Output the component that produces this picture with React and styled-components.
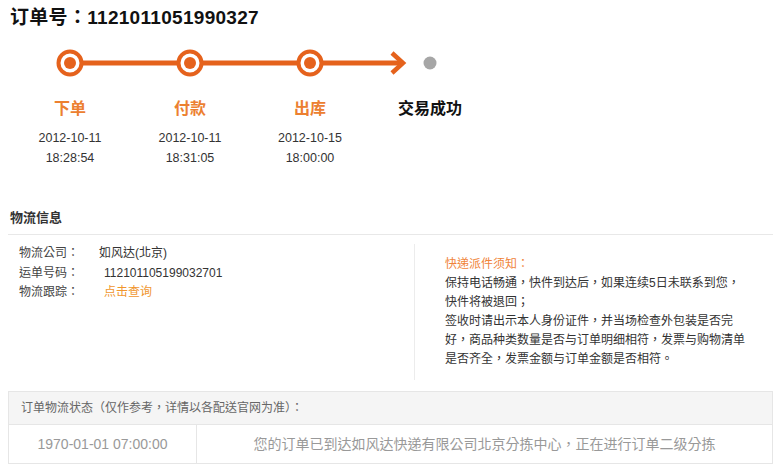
import styled, { createGlobalStyle } from "styled-components";

const GlobalStyle = createGlobalStyle`
  body {
    margin: 0;
    background: #fff;
    font-family: "Liberation Sans", "Noto Sans CJK TC", "Noto Sans CJK SC", sans-serif;
    color: #333;
  }
`;

const Page = styled.div`
  width: 765px;
  padding: 0 2px 0 8px;
`;

const OrderTitle = styled.h1`
  margin: 0;
  padding-left: 2px;
  height: 35px;
  line-height: 36px;
  font-size: 19px;
  font-weight: bold;
  color: #111;
  letter-spacing: 0.3px;
`;

const Track = styled.svg`
  display: block;
  margin: 13px 0 0 2px;
`;

const Steps = styled.div`
  display: flex;
  margin: 20px 0 0 2px;
`;

const Step = styled.div`
  width: 120px;
  text-align: center;
`;

const StepName = styled.div`
  font-size: 16px;
  font-weight: bold;
  line-height: 22px;
  color: ${({ $done }) => ($done ? "#ec8030" : "#111")};
`;

const StepTime = styled.div`
  margin-top: 8px;
  font-size: 12.5px;
  line-height: 20px;
  color: #333;
`;

const SectionTitle = styled.h2`
  margin: 40px 0 0;
  padding: 0 0 6px 2px;
  font-size: 13px;
  line-height: 20px;
  font-weight: bold;
  color: #333;
  border-bottom: 1px solid #e8e8e8;
`;

const InfoBox = styled.div`
  display: flex;
  padding-top: 9px;
`;

const InfoLeft = styled.div`
  width: 395px;
  height: 136px;
  padding-left: 11px;
  border-right: 1px solid #ececec;
`;

const InfoRow = styled.div`
  display: flex;
  font-size: 12px;
  line-height: 19.5px;
`;

const InfoLabel = styled.span`
  width: 80px;
  color: #444;
`;

const InfoValue = styled.span`
  padding-left: ${({ $indent }) => ($indent ? "5px" : "0")};
  color: ${({ $link }) => ($link ? "#f0962e" : "#333")};
  cursor: ${({ $link }) => ($link ? "pointer" : "auto")};
`;

const Notice = styled.div`
  width: 306px;
  padding: 11px 0 0 30px;
  font-size: 12px;
  line-height: 19px;
  color: #333;
`;

const NoticeTitle = styled.div`
  color: #f0843a;
`;

const StatusTable = styled.div`
  margin-top: 11px;
  border: 1px solid #e6e6e6;
`;

const StatusHead = styled.div`
  height: 32px;
  line-height: 32px;
  padding-left: 12px;
  background: #f5f5f5;
  border-bottom: 1px solid #e6e6e6;
  font-size: 12px;
  color: #666;
`;

const StatusRow = styled.div`
  display: flex;
  height: 38px;
  line-height: 38px;
  color: #999;
`;

const StatusTime = styled.div`
  width: 187px;
  text-align: center;
  font-size: 14px;
  border-right: 1px solid #e6e6e6;
`;

const StatusText = styled.div`
  flex: 1;
  text-align: center;
  font-size: 14px;
`;

const ORANGE = "#e5621c";

function ProgressTrack() {
  const points = [60, 180, 300];
  return (
    <Track width="440" height="30" viewBox="0 0 440 30">
      <line x1="60" y1="15" x2="392" y2="15" stroke={ORANGE} strokeWidth="5" />
      <polyline
        points="382,5 393,15 382,25"
        fill="none"
        stroke={ORANGE}
        strokeWidth="4.5"
        strokeLinejoin="miter"
      />
      {points.map((x) => (
        <g key={x}>
          <circle cx={x} cy="15" r="11.5" fill="#fff" stroke={ORANGE} strokeWidth="4" />
          <circle cx={x} cy="15" r="6" fill={ORANGE} />
        </g>
      ))}
      <circle cx="420" cy="15" r="6.5" fill="#a6a6a6" />
    </Track>
  );
}

const steps = [
  { name: "下单", date: "2012-10-11", time: "18:28:54", done: true },
  { name: "付款", date: "2012-10-11", time: "18:31:05", done: true },
  { name: "出库", date: "2012-10-15", time: "18:00:00", done: true },
  { name: "交易成功", done: false },
];

export default function App() {
  return (
    <>
      <GlobalStyle />
      <Page>
        <OrderTitle>订单号：1121011051990327</OrderTitle>
        <ProgressTrack />
        <Steps>
          {steps.map((s) => (
            <Step key={s.name}>
              <StepName $done={s.done}>{s.name}</StepName>
              {s.date && (
                <StepTime>
                  {s.date}
                  <br />
                  {s.time}
                </StepTime>
              )}
            </Step>
          ))}
        </Steps>

        <SectionTitle>物流信息</SectionTitle>
        <InfoBox>
          <InfoLeft>
            <InfoRow>
              <InfoLabel>物流公司：</InfoLabel>
              <InfoValue>如风达(北京)</InfoValue>
            </InfoRow>
            <InfoRow>
              <InfoLabel>运单号码：</InfoLabel>
              <InfoValue $indent>112101105199032701</InfoValue>
            </InfoRow>
            <InfoRow>
              <InfoLabel>物流跟踪：</InfoLabel>
              <InfoValue $indent $link>点击查询</InfoValue>
            </InfoRow>
          </InfoLeft>
          <Notice>
            <NoticeTitle>快递派件须知：</NoticeTitle>
            保持电话畅通，快件到达后，如果连续5日未联系到您，快件将被退回；
            <br />
            签收时请出示本人身份证件，并当场检查外包装是否完好，商品种类数量是否与订单明细相符，发票与购物清单是否齐全，发票金额与订单金额是否相符。
          </Notice>
        </InfoBox>

        <StatusTable>
          <StatusHead>订单物流状态（仅作参考，详情以各配送官网为准）：</StatusHead>
          <StatusRow>
            <StatusTime>1970-01-01 07:00:00</StatusTime>
            <StatusText>您的订单已到达如风达快递有限公司北京分拣中心，正在进行订单二级分拣</StatusText>
          </StatusRow>
        </StatusTable>
      </Page>
    </>
  );
}
